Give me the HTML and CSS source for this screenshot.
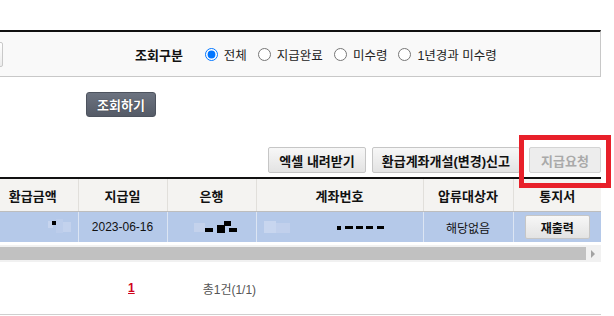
FILE: index.html
```html
<!DOCTYPE html>
<html lang="ko">
<head>
    <meta charset="UTF-8">
    <title>환급금 조회</title>
    <link rel="stylesheet" href="styles.css">
</head>
<body>
    <div class="wrap">
        <div class="search-box">
            <input type="text" class="search-input">
            <span class="search-label">조회구분</span>
            <label class="radio"><input type="radio" name="gubun" checked>전체</label>
            <label class="radio"><input type="radio" name="gubun">지급완료</label>
            <label class="radio"><input type="radio" name="gubun">미수령</label>
            <label class="radio"><input type="radio" name="gubun">1년경과 미수령</label>
        </div>

        <div class="search-btns">
            <button class="btn-search">조회하기</button>
        </div>

        <div class="action-btns">
            <button class="btn btn-excel">엑셀 내려받기</button>
            <button class="btn btn-account">환급계좌개설(변경)신고</button>
            <span class="mark">
                <button class="btn btn-pay" disabled>지급요청</button>
                <span class="red-box"></span>
            </span>
        </div>

        <div class="grid">
            <table>
                <colgroup>
                    <col style="width:90px">
                    <col style="width:89px">
                    <col style="width:89px">
                    <col style="width:167px">
                    <col style="width:90px">
                    <col style="width:88px">
                </colgroup>
                <thead>
                    <tr>
                        <th>환급금액</th>
                        <th>지급일</th>
                        <th>은행</th>
                        <th>계좌번호</th>
                        <th>압류대상자</th>
                        <th>통지서</th>
                    </tr>
                </thead>
                <tbody>
                    <tr class="selected">
                        <td class="masked">
                            <svg width="90" height="30" viewBox="0 0 90 30">
                                <rect x="60" y="9" width="5" height="7" fill="#c6d4ee"/>
                                <rect x="68" y="7" width="7" height="14" fill="#bccdeb"/>
                                <rect x="75" y="10" width="8" height="10" fill="#c3d2ed"/>
                                <rect x="64" y="9" width="4" height="4" fill="#000"/>
                            </svg>
                        </td>
                        <td>2023-06-16</td>
                        <td class="masked">
                            <svg width="89" height="30" viewBox="0 0 89 30">
                                <rect x="26" y="11" width="11" height="9" fill="#c4d2ec"/>
                                <rect x="37" y="16" width="8" height="4" fill="#000"/>
                                <rect x="49" y="13" width="8" height="8" fill="#000"/>
                                <rect x="56" y="9" width="7" height="5" fill="#000"/>
                                <rect x="61" y="16" width="8" height="4" fill="#000"/>
                            </svg>
                        </td>
                        <td class="masked">
                            <svg width="167" height="30" viewBox="0 0 167 30">
                                <rect x="7" y="9" width="12" height="12" fill="#c8d6ef"/>
                                <rect x="19" y="11" width="14" height="10" fill="#c1d0ec"/>
                                <rect x="80" y="14" width="4" height="4" fill="#000"/>
                                <rect x="88" y="14" width="8" height="3" fill="#000"/>
                                <rect x="99" y="14" width="7" height="3" fill="#000"/>
                                <rect x="109" y="14" width="7" height="3" fill="#000"/>
                                <rect x="120" y="14" width="7" height="3" fill="#000"/>
                            </svg>
                        </td>
                        <td>해당없음</td>
                        <td><button class="btn btn-reprint">재출력</button></td>
                    </tr>
                </tbody>
            </table>
        </div>

        <div class="hscroll">
            <div class="thumb"></div>
            <span class="arrow"></span>
        </div>

        <div class="paging">
            <a href="#" class="page-on">1</a>
            <span class="total">총1건(1/1)</span>
        </div>
    </div>
</body>
</html>
```

FILE: styles.css
```css
body {
    margin: 0;
    background: #fff;
    font-family: "Liberation Sans", "Noto Sans CJK KR", sans-serif;
    font-size: 12px;
    color: #222;
}

.wrap {
    width: 601px;
    padding-top: 30px;
}

/* 검색 영역 */
.search-box {
    display: flex;
    align-items: center;
    height: 44px;
    border-top: 2px solid #111;
    border-bottom: 1px solid #c8c8c8;
    border-right: 1px solid #c8c8c8;
    background: #f9f9f9;
    overflow: hidden;
}

.search-input {
    width: 120px;
    height: 25px;
    margin: 0 0 0 -117px;
    padding: 0;
    border: 1px solid #c9c9c9;
    border-radius: 2px;
    background: linear-gradient(#fff, #ececec);
    box-sizing: border-box;
}

.search-label {
    margin-left: 132px;
    margin-right: 22px;
    font-size: 13px;
    font-weight: bold;
    color: #111;
}

.radio {
    display: flex;
    align-items: center;
    margin-right: 11px;
    font-size: 12.5px;
    color: #222;
}

.radio input {
    width: 13px;
    height: 13px;
    margin: 0 6px 0 0;
}

.search-btns {
    padding: 15px 0 0 86px;
}

.btn-search {
    height: 25px;
    padding: 0 10px;
    border: 1px solid #4d535e;
    border-radius: 3px;
    background: linear-gradient(#6c7380, #555b67);
    color: #fff;
    font-family: inherit;
    font-size: 13px;
    font-weight: bold;
    text-shadow: 0 0 1px #222;
}

/* 버튼 영역 */
.action-btns {
    display: flex;
    justify-content: flex-end;
    margin-top: 30px;
}

.btn {
    height: 26px;
    padding: 0 10px;
    border: 1px solid #c6c6c6;
    border-radius: 2px;
    background: linear-gradient(#f7f7f7, #e3e3e3);
    color: #111;
    font-family: inherit;
    font-size: 13px;
    font-weight: bold;
}

.btn-excel {
    margin-right: 6px;
}

.btn-account {
    padding: 0 9px;
}

.mark {
    position: relative;
    margin-left: 9px;
}

.btn-pay {
    width: 72px;
    padding: 0;
    color: #a9a9a9;
    background: #ededed;
    border-color: #d4d4d4;
}

.red-box {
    position: absolute;
    left: -10px;
    right: -10px;
    top: -12px;
    bottom: -15px;
    border: 5px solid #e8202a;
}

/* 목록 */
.grid {
    width: 601px;
    margin-top: 4px;
    overflow: hidden;
    border-top: 2px solid #111;
}

table {
    width: 613px;
    margin-left: -12px;
    table-layout: fixed;
    border-collapse: collapse;
}

th {
    height: 32px;
    padding: 0;
    background: #f4f3f1;
    border-left: 1px solid #e1dfdb;
    border-bottom: 1px solid #bdbdbd;
    font-size: 13px;
    font-weight: bold;
    color: #111;
}

td {
    height: 30px;
    padding: 0;
    border-left: 1px solid #dce5f3;
    text-align: center;
    color: #111;
}

th:first-child,
td:first-child {
    border-left: none;
}

.selected td {
    background: #b5c9e9;
}

.masked svg {
    display: block;
}

.btn-reprint {
    height: 24px;
    padding: 0 15px;
    font-size: 12px;
}

.hscroll {
    display: flex;
    align-items: center;
    height: 17px;
    margin-top: 3px;
    background: #f1f1f1;
}

.thumb {
    width: 586px;
    height: 13px;
    background: #c1c1c1;
}

.arrow {
    margin-left: 5px;
    border-left: 4px solid #a3a3a3;
    border-top: 4px solid transparent;
    border-bottom: 4px solid transparent;
}

/* 페이징 */
.paging {
    display: flex;
    align-items: center;
    height: 52px;
    padding-left: 128px;
    border-bottom: 1px solid #cfcfcf;
}

.page-on {
    color: #d0021b;
    font-weight: bold;
    text-decoration: underline;
}

.total {
    margin-left: 68px;
    color: #555;
}
```
